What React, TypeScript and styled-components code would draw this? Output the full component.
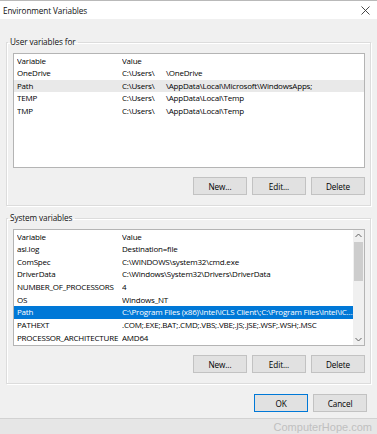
import React from 'react';
import styled, { createGlobalStyle } from 'styled-components';

const GlobalStyle = createGlobalStyle`
  html, body {
    margin: 0;
    padding: 0;
    background: #f0f0f0;
  }
  body {
    font-family: 'Open Sans', 'Noto Sans', sans-serif;
    font-size: 8.2px;
    color: #000;
  }
`;

type Row = { name: string; value: React.ReactNode; state?: 'hover' | 'selected' };

function UserPath({ rest }: { rest: string }) {
  return (
    <>
      <UserPrefix>C:\Users\</UserPrefix>
      {rest}
    </>
  );
}

const userRows: Row[] = [
  { name: 'OneDrive', value: <UserPath rest="\OneDrive" /> },
  { name: 'Path', value: <UserPath rest="\AppData\Local\Microsoft\WindowsApps;" />, state: 'hover' },
  { name: 'TEMP', value: <UserPath rest="\AppData\Local\Temp" /> },
  { name: 'TMP', value: <UserPath rest="\AppData\Local\Temp" /> },
];

const systemRows: Row[] = [
  { name: 'asl.log', value: 'Destination=file' },
  { name: 'ComSpec', value: 'C:\\WINDOWS\\system32\\cmd.exe' },
  { name: 'DriverData', value: 'C:\\Windows\\System32\\Drivers\\DriverData' },
  { name: 'NUMBER_OF_PROCESSORS', value: '4' },
  { name: 'OS', value: 'Windows_NT' },
  {
    name: 'Path',
    value: 'C:\\Program Files (x86)\\Intel\\iCLS Client\\;C:\\Program Files\\Intel\\iCLS Client\\;C:\\WINDOWS',
    state: 'selected',
  },
  { name: 'PATHEXT', value: '.COM;.EXE;.BAT;.CMD;.VBS;.VBE;.JS;.JSE;.WSF;.WSH;.MSC' },
  { name: 'PROCESSOR_ARCHITECTURE', value: 'AMD64' },
];

const VarList: React.FC<{ rows: Row[]; height: number; scroll?: boolean }> = ({ rows, height, scroll }) => (
  <ListBox style={{ height }}>
    <ListBody>
      <ListRow>
        <Cell>Variable</Cell>
        <Cell>Value</Cell>
      </ListRow>
      {rows.map((r) => (
        <ListRow key={r.name} $state={r.state}>
          <Cell>{r.name}</Cell>
          <Cell>{r.value}</Cell>
        </ListRow>
      ))}
    </ListBody>
    {scroll && (
      <ScrollBar>
        <Arrow>
          <svg width="7" height="5" viewBox="0 0 7 5">
            <polyline points="0.5,4 3.5,1 6.5,4" fill="none" stroke="#606060" strokeWidth="1" />
          </svg>
        </Arrow>
        <Track>
          <Thumb />
        </Track>
        <Arrow>
          <svg width="7" height="5" viewBox="0 0 7 5">
            <polyline points="0.5,1 3.5,4 6.5,1" fill="none" stroke="#606060" strokeWidth="1" />
          </svg>
        </Arrow>
      </ScrollBar>
    )}
  </ListBox>
);

const ButtonRow: React.FC = () => (
  <Buttons>
    <Button>New...</Button>
    <Button>Edit...</Button>
    <Button>Delete</Button>
  </Buttons>
);

export default function App() {
  return (
    <>
      <GlobalStyle />
      <Window>
        <TitleBar>
          <span>Environment Variables</span>
          <svg width="9" height="9" viewBox="0 0 9 9">
            <line x1="0.5" y1="0.5" x2="8.5" y2="8.5" stroke="#333" strokeWidth="0.9" />
            <line x1="8.5" y1="0.5" x2="0.5" y2="8.5" stroke="#333" strokeWidth="0.9" />
          </svg>
        </TitleBar>
        <Body>
          <Group $top={17}>
            <Legend>User variables for</Legend>
            <VarList rows={userRows} height={113} />
            <ButtonRow />
          </Group>
          <Group $top={6}>
            <Legend>System variables</Legend>
            <VarList rows={systemRows} height={115} scroll />
            <ButtonRow />
          </Group>
          <Footer>
            <Button $default>OK</Button>
            <Button>Cancel</Button>
          </Footer>
        </Body>
        <Watermark>ComputerHope.com</Watermark>
      </Window>
    </>
  );
}

const Window = styled.div`
  width: 377px;
  height: 434px;
  display: flex;
  flex-direction: column;
  overflow: hidden;
`;

const TitleBar = styled.div`
  height: 18px;
  background: #fff;
  border-top: 1px solid #b9b9b9;
  display: flex;
  align-items: center;
  justify-content: space-between;
  padding: 0 7px 0 3px;
  font-size: 8.2px;
  letter-spacing: -0.1px;
  color: #111;
`;

const Body = styled.div`
  flex: 1;
  background: #f0f0f0;
  padding: 0 6px 0 6px;
  display: flex;
  flex-direction: column;
`;

const Group = styled.fieldset<{ $top: number }>`
  margin: ${(p) => p.$top}px 0 0 0;
  padding: 5px 5px 10px 6px;
  border: 1px solid #dcdcdc;
  box-shadow: inset 1px 1px 0 #fff, 1px 1px 0 #fff;
  min-width: 0;
`;

const Legend = styled.legend`
  padding: 0 3px 0 2px;
  margin-left: -5px;
  line-height: 12px;
  font-size: 8.2px;
  letter-spacing: -0.1px;
  color: #111;
`;

const ListBox = styled.div`
  background: #fff;
  border: 1px solid #b4b4b4;
  display: flex;
  overflow: hidden;
`;

const ListBody = styled.div`
  flex: 1;
  min-width: 0;
  padding-top: 0.5px;
`;

const ListRow = styled.div<{ $state?: 'hover' | 'selected' }>`
  display: grid;
  grid-template-columns: 105px 1fr;
  height: 12.67px;
  line-height: 12.67px;
  padding-left: 3px;
  white-space: nowrap;
  font-size: 8px;
  letter-spacing: -0.2px;
  background: ${(p) => (p.$state === 'selected' ? '#0078d7' : p.$state === 'hover' ? '#e9e9e9' : 'transparent')};
  color: ${(p) => (p.$state === 'selected' ? '#fff' : '#000')};
`;

const Cell = styled.div`
  overflow: hidden;
  text-overflow: ellipsis;
`;

const UserPrefix = styled.span`
  display: inline-block;
  width: 44px;
`;

const ScrollBar = styled.div`
  width: 11px;
  background: #f0f0f0;
  display: flex;
  flex-direction: column;
`;

const Arrow = styled.div`
  height: 11px;
  display: flex;
  align-items: center;
  justify-content: center;
`;

const Track = styled.div`
  flex: 1;
  padding-top: 1px;
`;

const Thumb = styled.div`
  height: 39px;
  margin: 0 1px;
  background: #cdcdcd;
`;

const Buttons = styled.div`
  display: flex;
  justify-content: flex-end;
  gap: 5px;
  margin-top: 9px;
`;

const Button = styled.button<{ $default?: boolean }>`
  width: 54px;
  height: 18px;
  padding: 0;
  background: #e1e1e1;
  border: 1px solid ${(p) => (p.$default ? '#0078d7' : '#c2c2c2')};
  font-family: 'Open Sans', 'Noto Sans', sans-serif;
  font-size: 8.2px;
  letter-spacing: -0.1px;
  color: #000;
`;

const Footer = styled.div`
  display: flex;
  justify-content: flex-end;
  gap: 5px;
  margin-top: 10px;
  padding-right: 4px;
`;

const Watermark = styled.div`
  height: 15px;
  border-top: 1px solid #d2d2d2;
  background: #e6e6e6;
  text-align: right;
  padding-right: 5px;
  font-family: 'Liberation Sans', Arial, sans-serif;
  font-size: 11px;
  line-height: 16px;
  color: #c0c0c0;
`;
